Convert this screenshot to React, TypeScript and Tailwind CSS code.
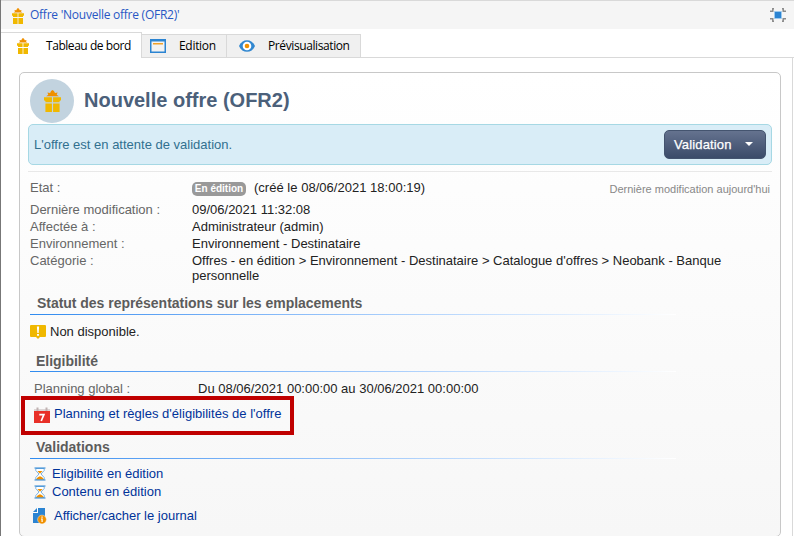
import type { ReactNode } from 'react';

function Gift({ className }: { className: string }) {
  return (
    <svg viewBox="0 0 12 16" preserveAspectRatio="none" className={'shrink-0 ' + className}>
      <path d="M1.500 4.600 3 3.500 2.400 1.900 4.300 2.200 5 .8 6 0l1 .8.8 1.400 1.800-.3L9 3.500l1.500 1.100z" fill="#f09000" />
      <path d="M0 5.200h5.600v3.700H1V8L0 7.500zM6.400 5.200H12v2.300l-1 .5v.9H6.400zM1 9.900h4.600V16H1zM6.400 9.900H11V16H6.400z" fill="#f0b800" />
    </svg>
  );
}

function WindowIcon() {
  return (
    <svg width="16" height="14" viewBox="0 0 16 14" className="shrink-0">
      <path d="M0 0h16v14H0z" fill="#2b84d2" />
      <path d="M1.500 2.500h13v10h-13z" fill="#f2f2f2" />
      <path d="M3 4h10v1.500H3z" fill="#f0a028" />
    </svg>
  );
}

function Eye() {
  return (
    <svg width="16" height="12" viewBox="0 0 16 12" className="shrink-0">
      <path d="M0 6C3-1.800 13-1.800 16 6 13 13.800 3 13.800 0 6z" fill="#3388d0" />
      <circle cx="8" cy="6" r="4.300" fill="#fff" />
      <circle cx="8" cy="6" r="2.300" fill="#f09000" />
    </svg>
  );
}

function Expand() {
  return (
    <svg width="16" height="14" viewBox="0 0 16 14" className="shrink-0">
      <path d="M4 .8H2.800V3M0 3.200h3.500M12 .8h1.200V3M16 3.200h-3.500M4 13.200H2.800V11M0 10.800h3.500M12 13.200h1.200V11M16 10.800h-3.500" stroke="#8a8a8a" strokeWidth="1.500" fill="none" />
      <path d="M4.500 3.500h7v7h-7z" fill="#2b84d2" stroke="#9fcbf0" strokeWidth=".8" />
    </svg>
  );
}

function Warning() {
  return (
    <svg width="16" height="14" viewBox="0 0 16 14" className="shrink-0">
      <path d="M1 0h14q1 0 1 1v10q0 1-1 1h-5l-2 2-2-2H1q-1 0-1-1V1q0-1 1-1z" fill="#f0b800" />
      <path d="M6.900 1.500h2.200L8.700 8H7.300zM7 9h2v1.800H7z" fill="#fff" />
    </svg>
  );
}

function Calendar() {
  return (
    <svg width="16" height="16" viewBox="0 0 16 16" className="shrink-0">
      <path d="M0 2h16v2H0z" fill="#dcd6d6" />
      <path d="M2.500 0.500h2v3.500h-2zM11.500 0.500h2v3.500h-2z" fill="#c0b2b2" />
      <path d="M0 4h16v12H0z" fill="#e83028" />
      <path d="M5.300 7.700h4.600L7.200 14" fill="none" stroke="#fff" strokeWidth="1.700" />
    </svg>
  );
}

function Hourglass() {
  return (
    <svg width="12" height="14" viewBox="0 0 12 14" className="shrink-0">
      <path d="M1.800 1.500v2L5 7l-3.200 3.500v2h8.400v-2L7 7l3.200-3.500v-2z" fill="#fff" stroke="#5a9fdc" strokeWidth=".8" />
      <path d="M.5.500h11v1H.5zM.5 12.500h11v1H.5z" fill="#2b84d2" />
      <path d="M3.500 4h5L6 6.800zM2.500 12.300c0-1.500 2-2.300 3.500-3.100 1.500.8 3.500 1.600 3.500 3.100z" fill="#f09000" />
    </svg>
  );
}

function Journal() {
  return (
    <svg width="14" height="16" viewBox="0 0 14 16" className="shrink-0">
      <path d="M5 0h7v10H7v5H0V5h5z" fill="#2b84d2" />
      <path d="M0 4 4 0v4z" fill="#2b84d2" />
      <path d="M4.500 0v4.500H0" fill="none" stroke="#fff" strokeWidth=".7" />
      <circle cx="9" cy="11.500" r="4.400" fill="#f09000" stroke="#fff" strokeWidth=".4" />
      <path d="M8.400 8.500h1.300v1.300H8.400zM8 10.400h1.700V14H8.500v-2.500H8z" fill="#fff" />
    </svg>
  );
}

function Field({ label, children }: { label: string; children: ReactNode }) {
  return (
    <div className="flex h-[17px] items-center">
      <span className="w-[162px] text-[#666]">{label}</span>
      {children}
    </div>
  );
}

function Section({ title, indent }: { title: string; indent: string }) {
  return (
    <div className="h-[22px]">
      <h2 className={'flex h-[21px] items-center text-[14px] font-bold tracking-[-0.02px] text-[#5c5c5c] ' + indent}>{title}</h2>
      <div className="h-px w-[646px] bg-linear-to-r from-[#2f8bef] to-white" />
    </div>
  );
}

export default function App() {
  return (
    <div className="relative flex h-[536px] w-[794px] overflow-hidden border-l border-[#777] bg-white font-['Liberation_Sans',Arial,sans-serif] text-[13px] leading-[15px] whitespace-nowrap text-[#222]">
      <div className="flex min-w-0 grow flex-col">
        <header className="flex h-[29px] shrink-0 items-center justify-between border-t border-[#d9d9d9] bg-[#f5f5f5] pr-2 pl-[11px] font-['Open_Sans','Noto_Sans',sans-serif] text-[12px]">
          <div className="flex items-center gap-[6px] text-[#2857c4]">
            <Gift className="mt-px h-4 w-3" />
            <span className="mb-px tracking-[-0.25px]">Offre 'Nouvelle offre (OFR2)'</span>
          </div>
          <Expand />
        </header>
        <nav className="mt-[3px] flex h-[26px] shrink-0 items-end font-['Open_Sans','Noto_Sans',sans-serif] text-[12px] text-black">
          <div className="flex h-[26px] w-[141px] items-center border-t border-r border-[#d9d9d9] pl-4">
            <Gift className="mt-px h-4 w-3" />
            <span className="ml-[17px] tracking-[-0.45px]">Tableau de bord</span>
          </div>
          <div className="flex h-6 w-[85px] items-center border-t border-r border-b border-[#d9d9d9] bg-[#f0f0f0] pl-2">
            <WindowIcon />
            <span className="mb-px ml-[13px] tracking-[-0.3px]">Edition</span>
          </div>
          <div className="flex h-6 w-[134px] items-center border-t border-r border-b border-[#d9d9d9] bg-[#f0f0f0] pl-3">
            <Eye />
            <span className="mb-px ml-[13px] tracking-[-0.4px]">Prévisualisation</span>
          </div>
          <div className="h-px grow bg-[#d9d9d9]" />
        </nav>
        <main className="flex h-[478px] w-[792px] shrink-0 border-r border-[#d9d9d9] pt-[14px] pl-[18px]">
          <div className="h-[465px] w-[762px] shrink-0 rounded-[5px] border border-[#c8c8c8] bg-linear-to-b from-white to-[#f7f7f7] pt-[6px] pl-2">
            <div className="flex h-[45px] items-start pl-[2px]">
              <div className="flex size-11 items-center justify-center rounded-full bg-[#c2d3df]">
                <Gift className="h-[22px] w-[17px]" />
              </div>
              <h1 className="mt-[9px] ml-[10px] text-[20px] leading-6 font-bold text-[#4b607a]">Nouvelle offre (OFR2)</h1>
            </div>
            <div className="flex h-[41px] w-[744px] items-center justify-between rounded-[5px] border border-[#a6d8e4] bg-[#d9edf7] pr-[5px] pl-[5px] text-[#31708f]">
              <span>L'offre est en attente de validation.</span>
              <button className="flex h-[29px] w-[102px] items-center rounded-[5px] border border-[#44546f] bg-linear-to-b from-[#65738f] to-[#3b4b69] pl-[9px] font-['Liberation_Sans',Arial,sans-serif] text-[13px] font-normal text-white">
                <span className="tracking-[0.15px] [-webkit-text-stroke:0.25px_white]">Validation</span>
                <span className="mb-[2px] ml-[13px] border-x-4 border-t-4 border-x-transparent border-t-white" />
              </button>
            </div>
            <div className="mt-[6px] h-px w-[744px] bg-[#e8e8e8]" />
            <div className="pl-[2px]">
              <div className="mt-[6px] flex h-[18px] w-[740px] items-center">
                <span className="w-[162px] text-[#666]">Etat :</span>
                <span className="mt-[3px] flex h-[14px] w-[54px] items-center justify-center rounded-[5px] bg-[#999] text-[10px] font-bold text-white">En édition</span>
                <span className="ml-2 tracking-[0.02px]">(créé le 08/06/2021 18:00:19)</span>
                <span className="mt-[5px] ml-auto text-[11px] text-[#888]">Dernière modification aujourd'hui</span>
              </div>
              <div className="mt-[5px]">
                <Field label="Dernière modification :">09/06/2021 11:32:08</Field>
                <Field label="Affectée à :">Administrateur (admin)</Field>
                <Field label="Environnement :">Environnement - Destinataire</Field>
                <Field label="Catégorie :">Offres - en édition &gt; Environnement - Destinataire &gt; Catalogue d'offres &gt; Neobank - Banque</Field>
              </div>
              <div className="-mt-px h-4 pl-[162px]">personnelle</div>
              <div className="mt-[9px]"><Section title="Statut des représentations sur les emplacements" indent="pl-[7px] tracking-[-0.03px]" /></div>
              <div className="mt-[9px] flex h-4 items-center gap-1"><Warning /><span className="mb-[2px]">Non disponible.</span></div>
              <div className="mt-[10px]"><Section title="Eligibilité" indent="pl-[6px] pt-[2px]" /></div>
              <div className="mt-2 flex h-4 items-center pl-1">
                <span className="w-[164px] text-[#666]">Planning global :</span>
                <span>Du 08/06/2021 00:00:00 au 30/06/2021 00:00:00</span>
              </div>
              <div className="mt-[9px] flex h-[18px] items-center gap-1 pl-1 text-[#003399]">
                <span className="mt-[2px]"><Calendar /></span><span className="mb-[2px] tracking-[0.02px]">Planning et règles d'éligibilités de l'offre</span>
              </div>
              <div className="mt-[14px]"><Section title="Validations" indent="pl-[6px]" /></div>
              <div className="mt-[6px] text-[#003399]">
                <div className="flex h-[18px] items-center gap-[6px] pl-1"><Hourglass /><span className="mb-[2px]">Eligibilité en édition</span></div>
                <div className="flex h-[18px] items-center gap-[6px] pl-1"><Hourglass /><span className="mb-[2px]">Contenu en édition</span></div>
                <div className="mt-[6px] flex h-[18px] items-center gap-[7px] pl-[3px]"><Journal /><span className="mb-[2px]">Afficher/cacher le journal</span></div>
              </div>
            </div>
          </div>
        </main>
      </div>
      <div className="absolute top-[396px] left-5 h-[39px] w-[273px] border-4 border-[#c00000]" />
    </div>
  );
}
